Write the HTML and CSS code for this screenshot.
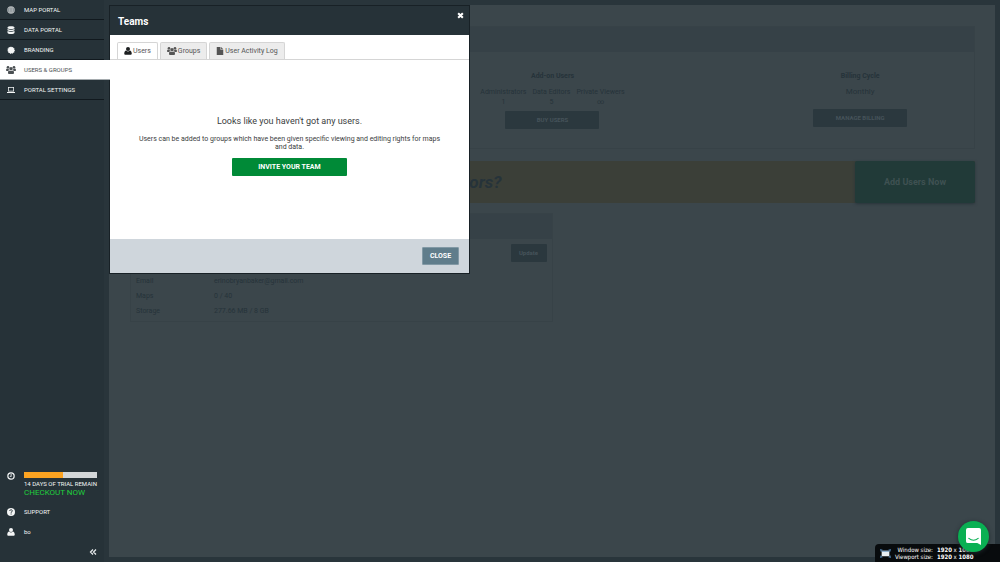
FILE: index.html
```html
<!DOCTYPE html>
<html lang="en">

<head>
    <meta charset="UTF-8">
    <meta name="viewport" content="width=device-width, initial-scale=1.0">
    <title>Users &amp; Groups</title>
    <link rel="stylesheet" href="styles.css">
</head>

<body>
    <!-- shared icon shapes -->
    <svg class="sprite" aria-hidden="true">
        <symbol id="user" viewBox="0 0 16 16">
            <circle cx="8" cy="4.2" r="4" />
            <path d="M4.5 7C2 7.5 .5 10 .5 13c0 1.500 1 2.700 2.500 2.700h10c1.500 0 2.500-1.200 2.500-2.700 0-3-1.500-5.500-4-6C10.500 8.600 9.400 9.200 8 9.200S5.500 8.600 4.500 7z" />
        </symbol>
        <symbol id="group" viewBox="0 0 20 16">
            <circle cx="4" cy="2.700" r="2.600" />
            <circle cx="16" cy="2.700" r="2.600" />
            <circle cx="10" cy="5.500" r="3.500" />
            <path d="M2 5C.5 5.500 0 7 0 8.500 0 9.500.7 10 1.500 10H4c.5-.8 1.400-1.300 2.300-1.300C5.500 7.500 5.400 6.500 5.600 5.500 4.500 6.200 3 6 2 5zM18 5c1.500.5 2 2 2 3.500 0 1-.7 1.500-1.500 1.500H16c-.5-.8-1.400-1.300-2.300-1.300.8-1.200.9-2.200.7-3.200 1.100.7 2.600.5 3.600-.5z" />
            <path d="M6.500 9C4.500 9.500 4 11.500 4 13.500 4 15 5 16 6.300 16h7.400c1.300 0 2.300-1 2.300-2.500 0-2-.5-4-2.500-4.500-1.900 1.500-5.100 1.500-7 0z" />
        </symbol>
    </svg>

    <div class="container">
        <aside class="sidebar">
            <nav class="menu">
                <a href="#" class="item">
                    <svg class="icon" viewBox="0 0 16 16">
                        <circle cx="8" cy="8" r="7.500" opacity=".75" />
                        <path d="M1 6h14M1 10h14M8 1v14M4.500 2.500c-2 4-2 7 0 11M11.500 2.500c2 4 2 7 0 11" fill="none" stroke="#68757b" />
                    </svg>
                    MAP PORTAL
                </a>
                <a href="#" class="item">
                    <svg class="icon" viewBox="0 0 16 16">
                        <path d="M1 3c0-3.300 14-3.300 14 0v1c0 2.700-14 2.700-14 0zM1 6c3 2 11 2 14 0v2c0 2.700-14 2.700-14 0zM1 10c3 2 11 2 14 0v3.500c0 3.300-14 3.300-14 0z" />
                    </svg>
                    DATA PORTAL
                </a>
                <a href="#" class="item">
                    <svg class="icon" viewBox="0 0 16 16">
                        <path d="M8 1l1.800 1.600 2.300-.7.700 2.300 2.300.7-.7 2.300L16 9l-1.600 1.800.3 2.300-2.400.4-1.200 2-2.200-.9L6.700 16l-1.500-1.900-2.400-.1-.1-2.400L.8 10l1-2.200L.9 5.500l2.200-.9.5-2.400 2.400.4z" />
                    </svg>
                    BRANDING
                </a>
                <a href="#" class="item active">
                    <svg class="icon wide" viewBox="0 0 20 16"><use href="#group" /></svg>
                    USERS &amp; GROUPS
                </a>
                <a href="#" class="item">
                    <svg class="icon" viewBox="0 0 16 16">
                        <path d="M2 2h12v9H2zM3.500 3.500v6h9v-6zM0 12h16v2H0z" fill-rule="evenodd" />
                    </svg>
                    PORTAL SETTINGS
                </a>
            </nav>

            <div class="bottom">
                <div class="trial">
                    <svg class="icon" viewBox="0 0 16 16">
                        <circle cx="8" cy="8" r="6.300" fill="none" stroke="currentColor" stroke-width="2.400" />
                        <path d="M7.300 4h1.800v5.500H5.500V7.800h1.800z" />
                    </svg>
                    <div class="trial-info">
                        <div class="bar">
                            <div class="fill" style="width: 53%"></div>
                        </div>
                        <p class="days">14 DAYS OF TRIAL REMAIN</p>
                        <a href="#" class="checkout">CHECKOUT NOW</a>
                    </div>
                </div>
                <a href="#" class="item">
                    <svg class="icon" viewBox="0 0 16 16">
                        <circle cx="8" cy="8" r="8" />
                        <path d="M5.500 6c0-3.500 5.200-3 5.200-.3C10.700 7.500 8.200 7.500 8.200 9.500M8.200 11v2" fill="none" stroke="#263238" stroke-width="2" />
                    </svg>
                    SUPPORT
                </a>
                <a href="#" class="item">
                    <svg class="icon" viewBox="0 0 16 16"><use href="#user" /></svg>
                    bo
                </a>
                <button class="collapse" aria-label="Collapse menu">
                    <svg class="icon" viewBox="0 0 16 16">
                        <path d="M8 3L3 8l5 5M14 3L9 8l5 5" fill="none" stroke="currentColor" stroke-width="2.500" />
                    </svg>
                </button>
            </div>
        </aside>

        <main class="page">
            <section class="card">
                <div class="card-head"></div>
                <div class="plan">
                    <div class="addon">
                        <h2>Add-on Users</h2>
                        <dl class="counts">
                            <div><dt>Administrators</dt><dd>1</dd></div>
                            <div><dt>Data Editors</dt><dd>5</dd></div>
                            <div><dt>Private Viewers</dt><dd>∞</dd></div>
                        </dl>
                        <button class="dim-btn">BUY USERS</button>
                    </div>
                    <div class="billing">
                        <h2>Billing Cycle</h2>
                        <p>Monthly</p>
                        <button class="dim-btn">MANAGE BILLING</button>
                    </div>
                </div>
            </section>

            <section class="banner">
                <p>tors?</p>
                <button class="add-users">Add Users Now</button>
            </section>

            <section class="card account">
                <div class="card-head"></div>
                <div class="account-body">
                    <button class="dim-btn update">Update</button>
                    <table>
                        <tr><th>Email</th><td>erinobryanbaker@gmail.com</td></tr>
                        <tr><th>Maps</th><td>0 / 40</td></tr>
                        <tr><th>Storage</th><td>277.66 MB / 8 GB</td></tr>
                    </table>
                </div>
            </section>

            <div class="modal" role="dialog" aria-labelledby="modalTitle">
                <header class="modal-head">
                    <h1 id="modalTitle">Teams</h1>
                    <button class="x-btn" aria-label="Close">
                        <svg viewBox="0 0 12 12"><path d="M2 2l8 8M10 2l-8 8" stroke="#fff" stroke-width="3.500" /></svg>
                    </button>
                </header>
                <div class="modal-body">
                    <div class="tabs" role="tablist">
                        <button class="tab selected" role="tab">
                            <svg class="icon" viewBox="0 0 16 16"><use href="#user" /></svg>
                            Users
                        </button>
                        <button class="tab" role="tab">
                            <svg class="icon wide" viewBox="0 0 20 16"><use href="#group" /></svg>
                            Groups
                        </button>
                        <button class="tab" role="tab">
                            <svg class="icon" viewBox="0 0 16 16"><path d="M1.500 0H9v5.500h5.500V16h-13zM10.200 0l4.300 4.300h-4.300z" /></svg>
                            User Activity Log
                        </button>
                    </div>
                    <div class="empty">
                        <h2>Looks like you haven't got any users.</h2>
                        <p>Users can be added to groups which have been given specific viewing and editing rights for maps and data.</p>
                        <button class="invite">INVITE YOUR TEAM</button>
                    </div>
                </div>
                <footer class="modal-foot">
                    <button class="close-btn">CLOSE</button>
                </footer>
            </div>
        </main>
    </div>

    <div class="size-info">
        <svg viewBox="0 0 20 16">
            <path d="M0 0l5 1-4 4zM20 0l-5 1 4 4zM0 16l5-1-4-4zM20 16l-5-1 4-4z" fill="#4d7ba6" />
            <path d="M3 3h14v10H3z" fill="#e9eff3" />
            <path d="M3 3h14v2H3z" fill="#7fa6c9" />
        </svg>
        <dl>
            <dt>Window size:</dt><dd><b>1920</b> x <b>1080</b></dd>
            <dt>Viewport size:</dt><dd><b>1920</b> x <b>1080</b></dd>
        </dl>
    </div>

    <button class="chat" aria-label="Open chat">
        <svg viewBox="0 0 16 18">
            <path d="M2 0h12q2 0 2 2v16l-4-2H2q-2 0-2-2V2q0-2 2-2z" fill="#fff" />
            <path d="M3 11q5 4 10 0" fill="none" stroke="#0ab053" stroke-width="1.200" stroke-linecap="round" />
        </svg>
    </button>
</body>

</html>
```
FILE: styles.css
```css
* {
    box-sizing: border-box;
}

body {
    margin: 0;
    background-color: #29353b;
    color: #fff;
    font-family: Roboto, "Liberation Sans", sans-serif;
    font-size: 7px;
    line-height: 8px;
}

h1, h2, p, dl, dd {
    margin: 0;
}

button {
    padding: 0;
    border: none;
    font-family: inherit;
    font-size: 7px;
    line-height: 8px;
    cursor: pointer;
}

a {
    color: inherit;
    text-decoration: none;
}

.sprite {
    position: absolute;
    width: 0;
    height: 0;
}

.container {
    display: flex;
    min-height: 100vh;
}

.icon {
    width: 8px;
    height: 8px;
    fill: currentColor;
}

.icon.wide {
    width: 10px;
}

/* sidebar */
.sidebar {
    display: flex;
    flex-direction: column;
    justify-content: space-between;
    flex: none;
    width: 104px;
    background-color: #263238;
    color: #f4f6f6;
}

.item {
    display: grid;
    grid-template-columns: 21px 1fr;
    align-items: center;
    height: 20px;
    padding-right: 4px;
    font-size: 6px;
}

.item .icon,
.trial .icon {
    justify-self: center;
}

.menu .item {
    border-bottom: 1px solid #11191e;
}

.item,
.trial {
    column-gap: 3px;
}

.menu .active {
    width: 110px;
    position: relative;
    z-index: 3;
    background-color: #fff;
    border-color: #a5abae;
    color: #4a4f52;
}

.trial {
    display: grid;
    grid-template-columns: 21px 1fr;
    padding-right: 7px;
    margin-bottom: 5px;
}

.bar {
    height: 6px;
    background-color: #d3d6d8;
}

.fill {
    height: 100%;
    background-color: #fca321;
}

.days {
    margin-top: 2px;
    font-size: 6px;
    white-space: nowrap;
}

.checkout {
    display: block;
    color: #1fd03c;
    font-size: 8px;
    line-height: 9px;
}

.collapse {
    display: block;
    margin-left: auto;
    padding: 6px 7px;
    background: none;
    color: #e8ebec;
}

.collapse .icon {
    display: block;
}

/* page behind the dialog */
.page {
    flex: 1;
    position: relative;
    margin: 5px;
    padding: 21px 20px 21px 21px;
    background-color: #3b464b;
    color: #26333a;
}

.card {
    border: 1px solid #374247;
}

.card-head {
    height: 25px;
    background-color: #364147;
}

.card h2 {
    font-size: 7px;
}

.plan {
    display: grid;
    grid-template-columns: 27% 46% 27%;
    height: 96px;
    padding-top: 20px;
    text-align: center;
}

.addon {
    grid-column: 2;
}

.billing p {
    margin: 8px 0 13px;
    font-size: 8px;
}

.counts {
    display: flex;
    justify-content: center;
    gap: 6px;
    margin: 7px 0 4px;
    line-height: 10px;
}

.dim-btn {
    width: 94px;
    height: 18px;
    border-radius: 1px;
    background-color: #2b383e;
    color: #46535a;
    font-size: 6px;
    font-weight: bold;
}

.banner {
    display: flex;
    justify-content: space-between;
    align-items: center;
    margin: 12px 0 10px;
    background-color: #3b3f38;
}

.banner p {
    padding-left: 334px;
    font-size: 17px;
    font-style: italic;
    font-weight: bold;
}

.add-users {
    width: 120px;
    height: 42px;
    border-radius: 2px;
    background-color: #213a38;
    box-shadow: 0 1px 3px #28343a;
    color: #3f5152;
    font-size: 9px;
    font-weight: bold;
}

.account {
    width: 50%;
}

.account-body {
    padding: 5px 5px 2px;
}

.update {
    display: block;
    width: 36px;
    margin-left: auto;
}

table {
    margin-top: 12px;
    border-spacing: 0;
    line-height: 15px;
}

th, td {
    padding: 0;
    text-align: left;
    font-weight: normal;
}

th {
    width: 78px;
}

/* dialog */
.modal {
    position: absolute;
    top: 0;
    left: 0;
    width: 361px;
    border: 1px solid #182126;
    background-color: #fff;
    color: #3a3d40;
}

.modal-head {
    display: flex;
    justify-content: space-between;
    align-items: flex-start;
    height: 29px;
    padding: 6px 5px 0 8px;
    background-color: #263238;
    color: #fff;
}

.modal-head h1 {
    padding-top: 4px;
    font-size: 10px;
    line-height: 12px;
}

.x-btn {
    background: none;
}

.x-btn svg {
    display: block;
    width: 7px;
    height: 7px;
}

.modal-body {
    padding-top: 7px;
}

.tabs {
    display: flex;
    gap: 2px;
    padding-left: 7px;
    border-bottom: 1px solid #d5d5d5;
}

.tab {
    display: flex;
    align-items: center;
    gap: 1px;
    height: 17px;
    padding: 0 6px;
    border: 1px solid #d5d5d5;
    border-bottom: none;
    border-radius: 2px 2px 0 0;
    background-color: #ececec;
    color: #555;
}

.tab.selected {
    background-color: #fff;
}

.tab.selected .icon {
    color: #1d1f20;
}

.empty {
    padding: 55px 24px 63px;
    text-align: center;
}

.empty h2 {
    font-size: 9px;
    font-weight: normal;
    line-height: 12px;
}

.empty p {
    margin: 8px 0 7px;
}

.invite {
    width: 115px;
    height: 18px;
    border-radius: 1px;
    background-color: #008a37;
    color: #fff;
    font-weight: bold;
}

.modal-foot {
    display: flex;
    justify-content: flex-end;
    padding: 8px 10px;
    background-color: #cfd6dc;
}

.close-btn {
    width: 37px;
    height: 18px;
    border: 1px solid #8299a5;
    border-radius: 1px;
    background-color: #607d8b;
    color: #fff;
    font-weight: bold;
}

/* corner widgets */
.size-info {
    position: fixed;
    right: 0;
    bottom: 0;
    z-index: 4;
    display: flex;
    align-items: center;
    gap: 4px;
    width: 125px;
    height: 18px;
    padding-left: 5px;
    border-radius: 4px 0 0 0;
    background-color: #080b0d;
    font-family: "DejaVu Sans Condensed", "DejaVu Sans", sans-serif;
    font-size: 6px;
    line-height: 7px;
}

.size-info svg {
    width: 11px;
    height: 9px;
}

.size-info dl {
    display: grid;
    grid-template-columns: auto auto;
    column-gap: 4px;
    white-space: nowrap;
}

.size-info dt {
    text-align: right;
}

.chat {
    position: fixed;
    right: 11px;
    bottom: 10px;
    z-index: 5;
    width: 31px;
    height: 31px;
    border-radius: 50%;
    background-color: #0ab053;
    box-shadow: 0 1px 4px #20292d;
}

.chat svg {
    width: 15px;
    height: 17px;
    vertical-align: middle;
}
```
